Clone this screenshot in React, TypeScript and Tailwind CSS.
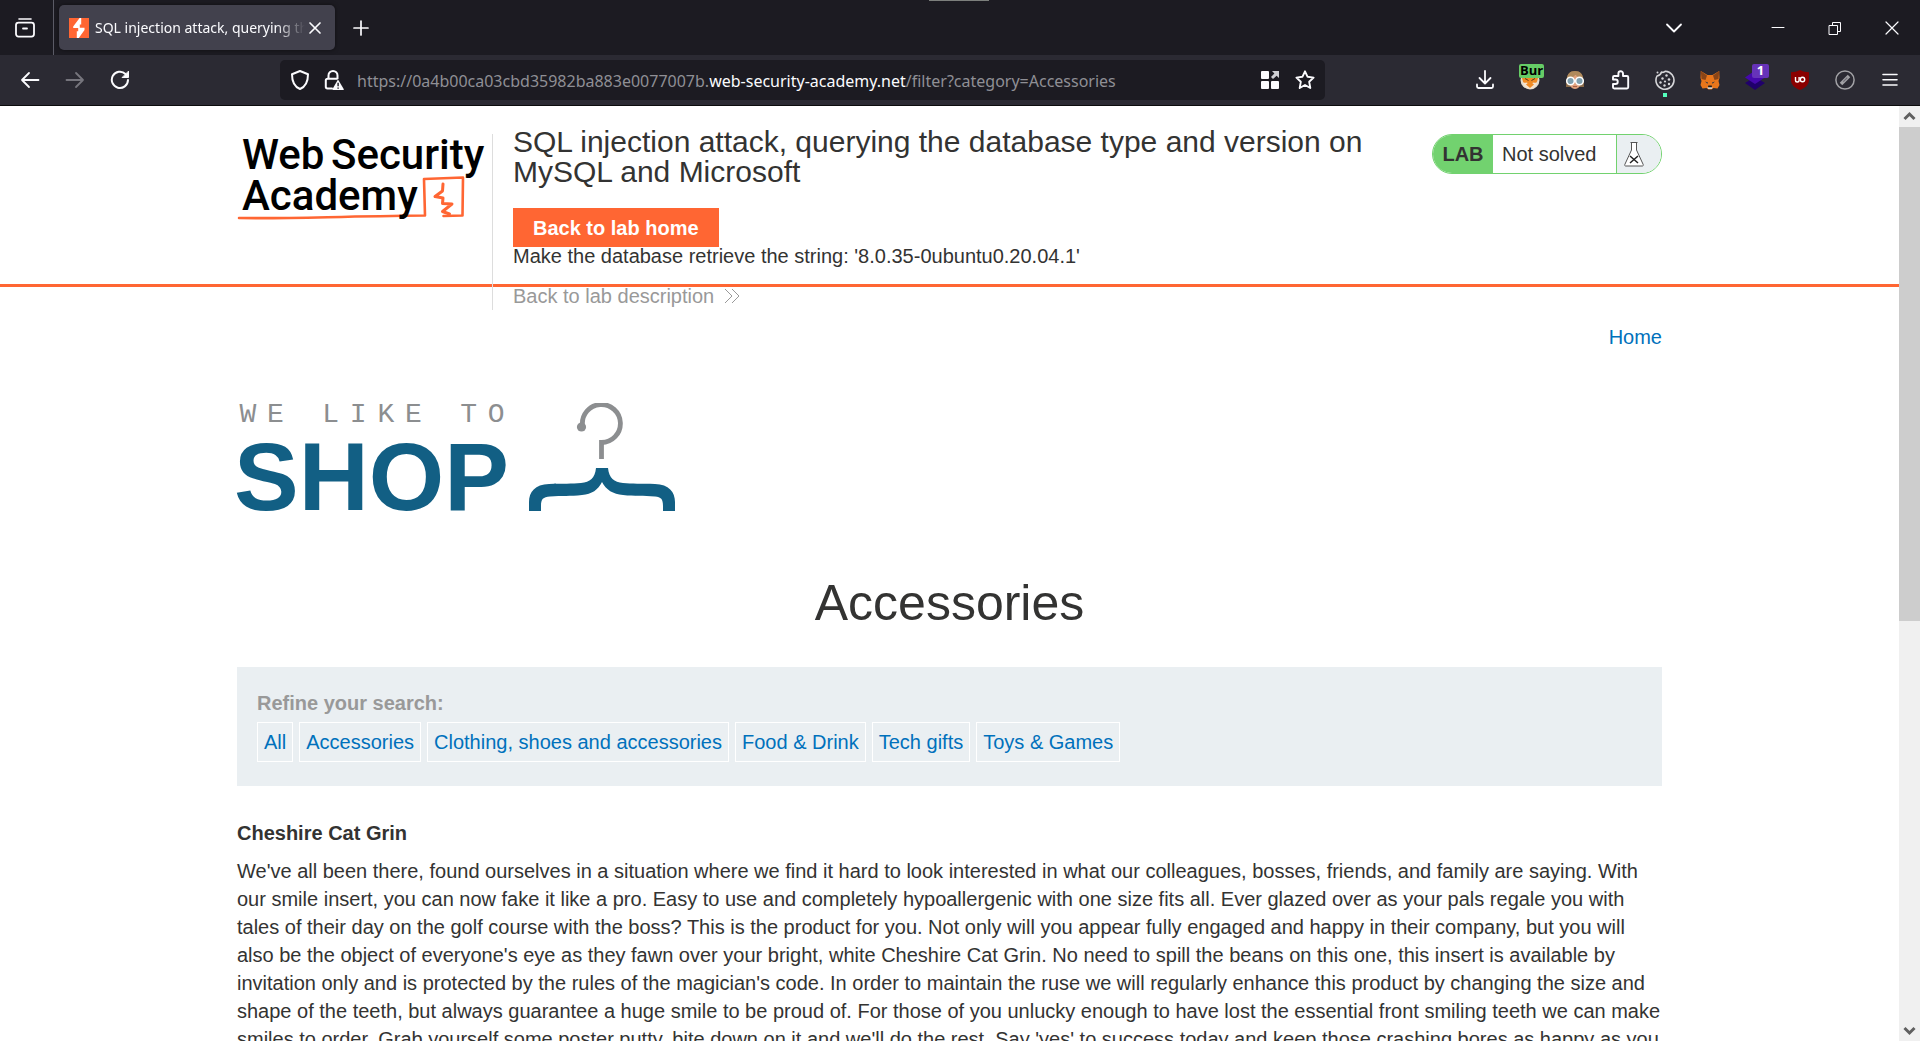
import React from "react";

const CATEGORIES = [
  "All",
  "Accessories",
  "Clothing, shoes and accessories",
  "Food & Drink",
  "Tech gifts",
  "Toys & Games",
];

const DESCRIPTION =
  "We've all been there, found ourselves in a situation where we find it hard to look interested in what our colleagues, bosses, friends, and family are saying. With our smile insert, you can now fake it like a pro. Easy to use and completely hypoallergenic with one size fits all. Ever glazed over as your pals regale you with tales of their day on the golf course with the boss? This is the product for you. Not only will you appear fully engaged and happy in their company, but you will also be the object of everyone's eye as they fawn over your bright, white Cheshire Cat Grin. No need to spill the beans on this one, this insert is available by invitation only and is protected by the rules of the magician's code. In order to maintain the ruse we will regularly enhance this product by changing the size and shape of the teeth, but always guarantee a huge smile to be proud of. For those of you unlucky enough to have lost the essential front smiling teeth we can make smiles to order. Grab yourself some poster putty, bite down on it and we'll do the rest. Say 'yes' to success today and keep those crashing bores as happy as you";

type IconProps = { children: React.ReactNode; className?: string; width?: number };

function Icon({ children, className = "", width = 2 }: IconProps) {
  return (
    <svg
      viewBox="0 0 20 20"
      className={`size-5 shrink-0 ${className}`}
      fill="none"
      stroke="currentColor"
      strokeWidth={width}
      strokeLinecap="round"
      strokeLinejoin="round"
      aria-hidden="true"
    >
      {children}
    </svg>
  );
}

function BarButton({ label, children }: { label: string; children: React.ReactNode }) {
  return (
    <button
      type="button"
      aria-label={label}
      className="relative flex h-10 w-[45px] shrink-0 items-center justify-center text-[#fbfbfe]"
    >
      {children}
    </button>
  );
}

function TabStrip() {
  return (
    <div className="relative flex h-[55px] shrink-0 items-center bg-[#1c1b22] text-[#fbfbfe]">
      <button
        type="button"
        aria-label="View recent browsing"
        className="flex h-full w-[54px] items-center border-r border-[#5b5b66] pl-[15px]"
      >
        <Icon width={1.8}>
          <path d="M4 1h12" strokeWidth={1.6} />
          <rect x="1" y="4.6" width="18" height="14" rx="2.5" />
          <path d="M8 10.5h4" />
        </Icon>
      </button>
      <div className="ml-[5px] flex h-[45px] w-[276px] items-center rounded-[5px] bg-[#42414d] pl-[10px] pr-[10px] shadow-[0_0_4px_rgba(0,0,0,0.5)]">
        <svg viewBox="0 0 20 20" className="size-5 shrink-0" aria-hidden="true">
          <rect width="20" height="20" fill="#ff6633" />
          <path d="M10.6 0 4.2 8.6v1.4h5v3.2H7.8V20h2L15.5 12V9.8h-4.7V6.4h1.4V0z" fill="#fff" />
        </svg>
        <span className="ml-[6px] min-w-0 flex-1 overflow-hidden whitespace-nowrap font-['Noto_Sans',sans-serif] text-[14px] leading-5 [mask-image:linear-gradient(to_right,black_86%,transparent)]">
          SQL injection attack, querying the
        </span>
        <button type="button" aria-label="Close tab" className="flex w-5 shrink-0 justify-center">
          <Icon width={1.7}>
            <path d="m5 5 10 10M15 5 5 15" />
          </Icon>
        </button>
      </div>
      <button type="button" aria-label="New tab" className="ml-4 flex">
        <Icon width={1.7}>
          <path d="M10 3v14M3 10h14" />
        </Icon>
      </button>
      <div className="absolute left-[929px] top-0 h-px w-[60px] bg-[#7c7f7c]" />
      <div className="ml-auto flex items-center">
        <button type="button" aria-label="List all tabs" className="mr-[47px] flex w-[58px] justify-center">
          <Icon width={1.8}>
            <path d="m3 6.5 7 7 7-7" />
          </Icon>
        </button>
        <button type="button" aria-label="Minimize" className="flex w-14 justify-center">
          <Icon width={1}>
            <path d="M4 9.5h12" />
          </Icon>
        </button>
        <button type="button" aria-label="Restore" className="flex w-[57px] justify-center">
          <Icon width={1}>
            <path d="M4.5 7.5h8v9h-8zM7.5 7.5v-3h8v9h-3" strokeLinecap="square" />
          </Icon>
        </button>
        <button type="button" aria-label="Close" className="flex w-[57px] justify-center">
          <Icon width={1.2}>
            <path d="m4 4 12 12M16 4 4 16" />
          </Icon>
        </button>
      </div>
    </div>
  );
}

function AddressBar() {
  return (
    <div className="relative ml-[138px] mr-[137px] flex h-10 min-w-0 flex-1 items-center overflow-hidden rounded-[5px] bg-[#1c1b22] px-[10px] text-[#fbfbfe]">
      <Icon>
        <path d="M10 1 2 4.2c0 7.2 2.2 12.4 8 14.8 5.8-2.4 8-7.6 8-14.8z" />
      </Icon>
      <svg viewBox="0 0 20 20" className="ml-[14px] size-5 shrink-0" fill="none" stroke="currentColor" strokeWidth="2" aria-hidden="true">
        <path d="M4.5 9V5.500a4.500 4.500 0 0 1 9 0V9" />
        <path d="M8 18.500H3.500a1.700 1.700 0 0 1-1.700-1.700V10.500A1.700 1.700 0 0 1 3.500 8.800h9.500" strokeLinecap="round" />
        <path d="M14 9.500 8.500 19a.6.6 0 0 0 .5.900h10.200a.6.6 0 0 0 .5-.9z" fill="currentColor" stroke="none" />
        <path d="M14.100 12.800v3.400M14.100 17.400v1.300" stroke="#1c1b22" strokeWidth="1.400" />
      </svg>
      <div className="ml-[13px] min-w-0 flex-1 overflow-hidden whitespace-nowrap pt-[2px] font-['Noto_Sans',sans-serif] text-base text-[#8f8f95]">
        https://0a4b00ca03cbd35982ba883e0077007b.<span className="text-[#fbfbfe]">web-security-academy.net</span>
        /filter?category=Accessories
      </div>
      <input
        type="text"
        aria-label="Search or enter address"
        className="absolute inset-y-0 left-[77px] right-[90px] bg-transparent outline-none"
      />
      <button type="button" aria-label="Containers" className="relative mr-[15px] flex">
        <svg viewBox="0 0 20 20" className="size-5" fill="currentColor" aria-hidden="true">
          <rect x="1" y="1" width="8" height="8" rx="1" />
          <rect x="1" y="11" width="8" height="8" rx="1" />
          <rect x="11" y="11" width="8" height="8" rx="1" />
          <path d="M12 1h7v7l-2.400-2.200L13 9l-2-2 3.400-3.400z" fill="#cfcfd4" />
        </svg>
      </button>
      <button type="button" aria-label="Bookmark this page" className="relative flex">
        <Icon width={1.9}>
          <path d="m10 1.300 2.600 5.500 6 .8-4.400 4.200 1.100 6.200L10 15l-5.300 3 1.100-6.200L1.400 7.600l6-.8z" />
        </Icon>
      </button>
    </div>
  );
}

function Toolbar() {
  return (
    <div className="flex h-[51px] shrink-0 items-center border-b border-[#0c0c0d] bg-[#2b2a33] pl-[7px] pr-2">
      <BarButton label="Back">
        <Icon width={1.8}>
          <path d="M18.500 10H2M9 3l-7 7 7 7" />
        </Icon>
      </BarButton>
      <BarButton label="Forward">
        <Icon width={1.8} className="text-[#76757d]">
          <path d="M1.500 10H18M11 3l7 7-7 7" />
        </Icon>
      </BarButton>
      <BarButton label="Reload">
        <Icon width={2}>
          <path d="M15.500 4A8.100 8.100 0 1 0 18 10" />
          <path d="M18.500 1.500v6h-6z" fill="currentColor" strokeWidth="1" />
        </Icon>
      </BarButton>
      <AddressBar />
      <BarButton label="Downloads">
        <Icon width={1.8}>
          <path d="M10 1v12M4.500 8l5.500 5.500L15.500 8M2 14.500v2A1.500 1.500 0 0 0 3.500 18h13a1.500 1.500 0 0 0 1.500-1.500v-2" />
        </Icon>
      </BarButton>
      <BarButton label="Proxy settings">
        <svg viewBox="0 0 20 20" className="size-5" aria-hidden="true">
          <circle cx="10" cy="10" r="9.500" fill="#e3dccd" />
          <path d="M1.500 5c1 8 4 13 8.500 13s7.500-5 8.500-13l-5 2.500h-7z" fill="#f08b24" />
          <path d="M2.500 12c1.500 1 3 1 4.500.5l3 4 3-4c1.500.5 3 .5 4.500-.5-1 4-4 6.800-7.500 6.800S3.500 16 2.500 12z" fill="#f5e3cf" />
          <path d="m6 14.500 4 3.500 4-3.500-4-3z" fill="#f08b24" />
          <path d="m5 8.500 3.500 2M15 8.500l-3.500 2" stroke="#57361a" strokeWidth="1" />
        </svg>
        <span className="absolute left-3 top-1 flex h-[14px] w-[25px] items-center justify-center rounded-[2px] bg-[#66cc66] font-['Open_Sans',sans-serif] text-[13px] font-bold text-black">
          Bur
        </span>
      </BarButton>
      <BarButton label="User agent">
        <svg viewBox="0 0 20 20" className="size-5" aria-hidden="true">
          <path d="M1 17C1 5 3.500 1 10 1s9 4 9 16z" fill="#8a6b4a" />
          <path d="M4 9c0-3 2.500-4.500 6-4.500S16 6 16 9c0 6-2 10-6 10S4 15 4 9z" fill="#e0a07c" />
          <path d="M2 9c4-.5 7-2 8.500-4.500C12 7 15 8.500 18 9 18 4 15 1 10 1S2 4 2 9z" fill="#b08a5c" />
          <circle cx="5.500" cy="11" r="3.800" fill="#7f9fae" stroke="#fff" strokeWidth="1.500" />
          <circle cx="14.500" cy="11" r="3.800" fill="#7f9fae" stroke="#fff" strokeWidth="1.500" />
          <path d="M8 16.500h4" stroke="#a85f45" strokeWidth="1" />
        </svg>
      </BarButton>
      <BarButton label="Extensions">
        <Icon width={1.9}>
          <path d="M6 18.500h11a1.200 1.200 0 0 0 1.200-1.200V7.200A1.200 1.200 0 0 0 17 6h-4V3.500a2.300 2.300 0 0 0-4.600 0V6H4.200A1.200 1.200 0 0 0 3 7.200V9.500h2.500a2.200 2.200 0 0 1 0 4.500H3v3.300a1.200 1.200 0 0 0 1.200 1.200z" />
        </Icon>
      </BarButton>
      <BarButton label="Cookie editor">
        <svg viewBox="0 0 20 20" className="size-5 text-[#d6d6d9]" aria-hidden="true">
          <path d="M10.500 1.200C9 2.500 7.500 2.500 6.500 2c-.5 2-1.500 3.500-4.500 4A9 9 0 1 0 10.500 1.200z" fill="none" stroke="currentColor" strokeWidth="1.600" strokeLinejoin="round" />
          <g fill="currentColor">
            <circle cx="11.500" cy="5.500" r="1.200" />
            <circle cx="7.500" cy="8.500" r="1.200" />
            <circle cx="14" cy="9.500" r="1.300" />
            <circle cx="5.500" cy="12.500" r="1.200" />
            <circle cx="10" cy="11.500" r="1.100" />
            <circle cx="14" cy="14" r="1.200" />
            <circle cx="9.500" cy="15.500" r="1.200" />
            <circle cx="2.500" cy="2.500" r="1" />
          </g>
        </svg>
        <span className="absolute bottom-[3px] left-[21px] size-1 bg-[#54ffbd]" />
      </BarButton>
      <BarButton label="Wallet">
        <svg viewBox="0 0 20 20" className="size-5" aria-hidden="true">
          <path d="M.8 1 7.500 5h5l6.700-4 .3 7-1 3 1 4-2 3.500-4-.5-2 1.500H8.500L6.500 18l-4 .5L.5 15l1-4-1-3z" fill="#e8761b" />
          <path d="M.8 1 7 5.500 5.500 10 1.500 9zM19.200 1 13 5.500l1.500 4.500 4-1z" fill="#8a4517" />
          <path d="m5 11.500 3 1-.5 1.200zM15 11.500l-3 1 .5 1.200z" fill="#233447" />
          <path d="M7.500 17h5l-.5 2H8z" fill="#d9cfc6" />
          <path d="M8.300 15.500h3.400l.3 1.700H8z" fill="#1c1c1c" />
        </svg>
      </BarButton>
      <BarButton label="Technology profiler">
        <svg viewBox="0 0 20 20" className="size-5" aria-hidden="true">
          <path d="m0 13 10-6 10 6-10 7z" fill="#20006b" />
          <path d="m0 7.500 10-7 10 7-10 6.500z" fill="#4608ad" />
        </svg>
        <span className="absolute left-5 top-1 flex h-[14px] w-[17px] items-center justify-center rounded-[2px] bg-[#6633b9] font-['Open_Sans',sans-serif] text-[13px] font-bold text-white">
          1
        </span>
      </BarButton>
      <BarButton label="Content blocker">
        <svg viewBox="0 0 20 20" className="size-5" aria-hidden="true">
          <path d="M10 0c3 1.800 5.500 2.200 9 2.200V10c0 5-4 8-9 10-5-2-9-5-9-10V2.200C4.500 2.200 7 1.800 10 0z" fill="#8a0000" />
          <path d="M5.500 7v3.200a1.800 1.800 0 0 0 3.600 0V7" fill="none" stroke="#fff" strokeWidth="1.400" />
          <circle cx="12.500" cy="9.500" r="2.200" fill="none" stroke="#fff" strokeWidth="1.400" />
        </svg>
      </BarButton>
      <BarButton label="Page editor">
        <svg viewBox="0 0 20 20" className="size-5" aria-hidden="true">
          <circle cx="10" cy="10" r="9.100" fill="none" stroke="#a2a2a6" strokeWidth="1.500" />
          <path d="m6 14 8-8" stroke="#a2a2a6" strokeWidth="3.600" />
          <path d="m8.300 11.700 4-4" stroke="#6d6c74" strokeWidth="1.200" />
        </svg>
      </BarButton>
      <BarButton label="Open application menu">
        <Icon width={1.6}>
          <path d="M3 4.500h14M3 9.800h14M3 15h14" />
        </Icon>
      </BarButton>
    </div>
  );
}

function AcademyLogo() {
  return (
    <a href="#academy" aria-label="Web Security Academy" className="block w-[250px] shrink-0">
      <svg viewBox="0 0 250 90" className="block h-[90px] w-[250px] overflow-visible">
        <g fill="none" stroke="#ff6633" strokeWidth="2.600" strokeLinejoin="round" strokeLinecap="round">
          <path d="M2 84c50 1 90-1.500 186-2.500L187 45l39-1.500-.5 38-19 .5" />
          <path d="m206 50-.5 7-7.500 5.500 8 1.500-.5 5.500 9.500.5-9.500 7.500 7 2.500" strokeWidth="3" />
        </g>
        <g fontFamily="Roboto, sans-serif" fontSize="42" fontWeight="500" fill="#000">
          <text x="5" y="35">Web</text>
          <text x="94" y="35">Security</text>
          <text x="5" y="76">Academy</text>
        </g>
      </svg>
    </a>
  );
}

function LabHeader() {
  return (
    <header className="h-[181px] border-b-[3px] border-[#ff6633]">
      <div className="mx-auto flex max-w-[1425px] items-start pt-[21px]">
        <div className="mt-[7px] h-[176px] shrink-0 border-r border-[#dddddd] pr-[5px]">
          <AcademyLogo />
        </div>
        <div className="ml-5 w-[864px] min-w-0">
          <h2 className="text-[30px] leading-[30px]">
            SQL injection attack, querying the database type and version on MySQL and Microsoft
          </h2>
          <a
            href="#lab-home"
            className="mt-[21px] flex h-[39px] w-fit items-center bg-[#ff6633] px-5 font-bold text-white"
          >
            Back to lab home
          </a>
          <p className="-mt-px leading-5">Make the database retrieve the string: '8.0.35-0ubuntu0.20.04.1'</p>
          <a href="#description" className="mt-5 flex w-fit items-center leading-5 text-[#999999]">
            Back to lab description
            <svg viewBox="0 0 16 16" className="ml-[10px] size-4" fill="none" stroke="currentColor" aria-hidden="true">
              <path d="m1 1 7 7-7 7M8 1l7 7-7 7" />
            </svg>
          </a>
        </div>
        <div className="ml-auto mt-[7px] flex h-10 w-[230px] shrink-0 overflow-hidden rounded-full border border-[#72d26f]">
          <span className="flex w-[60px] items-center justify-center bg-[#72d26f] font-bold">LAB</span>
          <span className="flex flex-1 items-center pl-[9px]">Not solved</span>
          <span className="flex w-[45px] items-center border-l border-[#72d26f] bg-[#eaeff2] pl-[7px]">
            <svg viewBox="0 0 20 26" className="h-[26px] w-5" fill="#fff" stroke="#555" aria-hidden="true">
              <path d="M6.500 1.500h7M7.500 1.500V9L.8 23.500c-.4 1 .2 1.500 1 1.500h16.400c.8 0 1.400-.5 1-1.500L12.500 9V1.500" />
              <path d="m6 15 8 7M14 15l-8 7" stroke="#222" strokeWidth="1.500" />
            </svg>
          </span>
        </div>
      </div>
    </header>
  );
}

function ShopLogo() {
  return (
    <div className="flex">
      <div className="-ml-[3px] w-[279px]">
        <div
          className="grid w-[276px] grid-cols-10 font-['Liberation_Mono',monospace] text-[28px] leading-6 text-[#8c8e90]"
          aria-label="We like to"
        >
          {Array.from("WE LIKE TO").map((letter, i) => (
            <span key={i} className="text-center">
              {letter}
            </span>
          ))}
        </div>
        <div className="mt-px text-[97px] leading-[98px] font-bold text-[#125f84]">SHOP</div>
      </div>
      <svg viewBox="0 0 146 110" className="ml-4 h-[110px] w-[146px]" fill="none" aria-hidden="true">
        <path d="M53.500 24v-1.500A19 19 0 1 1 72.500 39.500V56" stroke="#8c8e90" strokeWidth="4.800" />
        <circle cx="52.500" cy="24" r="4.600" fill="#8c8e90" />
        <path
          d="M67 65h12c1 10 6 14 15 15 9 1 18 .5 32 1 14 .5 20 8 20 18v9h-12v-5c0-7-2-9-8-9.500-12-1-20 0-32-1.500-10-1-17-5-21-13C69 87 63 91 53 92c-12 1.500-20 .5-32 1.500-7 .5-9 2.500-9 9.500v5H0V99c0-10 6-17.500 20-18 14-.5 23 0 32-1 9-1 14-5 15-15z"
          fill="#125f84"
        />
      </svg>
    </div>
  );
}

function Scrollbar() {
  return (
    <div className="flex w-[21px] shrink-0 flex-col bg-[#f0f0f0] text-[#606060]" aria-hidden="true">
      <svg viewBox="0 0 21 21" className="size-[21px]" fill="none" stroke="currentColor" strokeWidth="3">
        <path d="m5.500 13 5-5 5 5" />
      </svg>
      <div className="h-[494px] bg-[#cdcdcd]" />
      <svg viewBox="0 0 21 21" className="mt-auto size-[21px]" fill="none" stroke="currentColor" strokeWidth="3">
        <path d="m5.500 8 5 5 5-5" />
      </svg>
    </div>
  );
}

export default function App() {
  return (
    <div className="flex h-screen flex-col overflow-hidden bg-white">
      <TabStrip />
      <Toolbar />
      <div className="flex min-h-0 flex-1">
        <div className="min-w-0 flex-1 overflow-hidden font-['Liberation_Sans',Arial,sans-serif] text-xl leading-7 text-[#333332]">
          <LabHeader />
          <main className="mx-auto max-w-[1425px]">
            <nav className="flex justify-end pt-9">
              <a href="#home" className="text-[#0071bc]">
                Home
              </a>
            </nav>
            <div className="mt-[52px]">
              <ShopLogo />
            </div>
            <h1 className="mt-[42px] text-center text-[50px] leading-[70px]">Accessories</h1>
            <section className="mt-[29px] bg-[#eaeff2] px-5 pt-[22px] pb-6">
              <h2 className="font-bold text-[#999999]">Refine your search:</h2>
              <div className="mt-[5px] flex flex-wrap gap-[6px]">
                {CATEGORIES.map((name) => (
                  <a
                    key={name}
                    href="#category"
                    className="flex h-10 items-center border border-white px-[6px] text-[#0071bc]"
                  >
                    {name}
                  </a>
                ))}
              </div>
            </section>
            <article className="mt-[33px]">
              <h3 className="font-bold">Cheshire Cat Grin</h3>
              <p className="mt-[10px]">{DESCRIPTION}</p>
            </article>
          </main>
        </div>
        <Scrollbar />
      </div>
    </div>
  );
}
